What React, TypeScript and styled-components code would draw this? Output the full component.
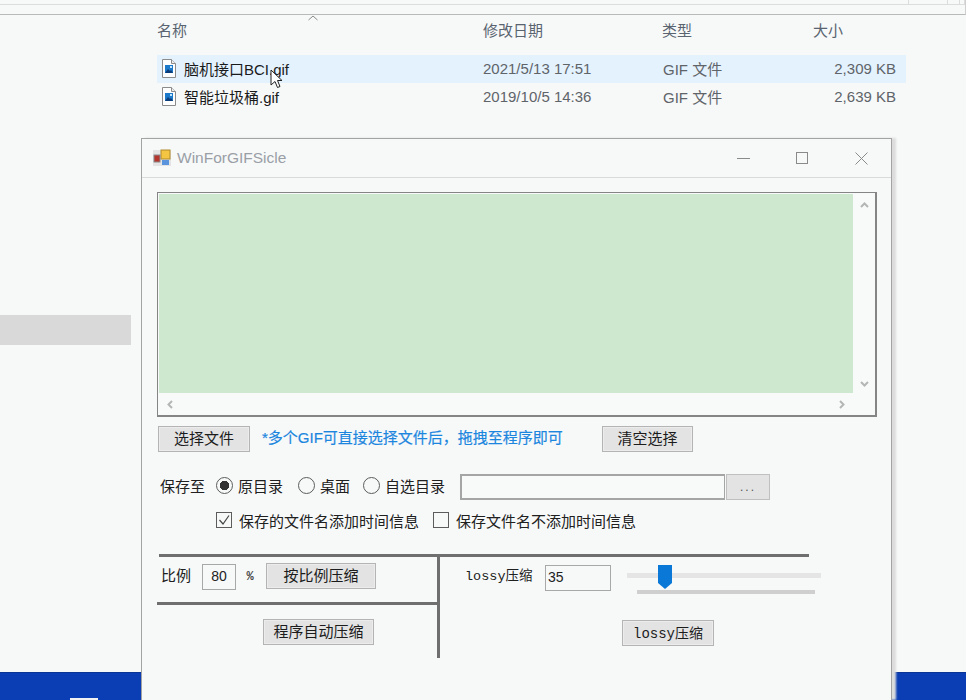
import React from 'react';
import styled, { createGlobalStyle } from 'styled-components';

const cjk = '"Liberation Sans", "Noto Sans CJK SC", sans-serif';
const mono = '"Liberation Mono", "Noto Sans CJK SC", monospace';

const GlobalStyle = createGlobalStyle`
    html, body {
        margin: 0;
        padding: 0;
        background: #f7f9f9;
    }
    * {
        box-sizing: border-box;
    }
`;

const Screen = styled.div`
    position: relative;
    width: 966px;
    height: 700px;
    overflow: hidden;
    display: flex;
    flex-direction: column;
    background: #f7f9f9;
    font-family: ${cjk};
`;

const Explorer = styled.div`
    flex: 1;
    display: flex;
    flex-direction: column;
`;

const AddressBar = styled.div`
    height: 15px;
    border-bottom: 1px solid #b9b9b9;
    border-right: 1px solid #cfcfcf;
`;

const SearchStrip = styled.div`
    height: 4px;
    display: flex;
    padding-left: 908px;
    gap: 11px;
`;

const SearchCell = styled.div<{ $width: number }>`
    width: ${({ $width }) => $width}px;
    border: 1px solid #dcdcdc;
    border-top: none;
    border-bottom: none;
`;

const AddressLine = styled.div`
    height: 1px;
    background: #dcdcdc;
`;

const ExplorerBody = styled.div`
    flex: 1;
    display: flex;
`;

const Sidebar = styled.div`
    width: 157px;
    padding: 300px 26px 0 0;
`;

const SidebarItem = styled.div`
    height: 30px;
    background: #d9d9d9;
`;

const FileList = styled.div`
    width: 749px;
    position: relative;
`;

const SortArrow = styled.svg`
    position: absolute;
    left: 150px;
    top: 0;
`;

const HeaderRow = styled.div`
    display: grid;
    grid-template-columns: 326px 179px 151px 93px;
    height: 40px;
    padding-top: 6px;
    font-size: 15px;
    line-height: 20px;
    color: #5a6470;
`;

const FileRow = styled.div<{ $hover?: boolean }>`
    display: grid;
    grid-template-columns: 326px 180px 150px 83px;
    align-items: center;
    height: 27.5px;
    font-size: 15px;
    color: #5f6469;
    background: ${({ $hover }) => ($hover ? '#e4f2fe' : 'transparent')};
`;

const NameCell = styled.div`
    display: flex;
    align-items: center;
    gap: 8px;
    padding-left: 5px;
    color: #1a1a1a;
    white-space: nowrap;
`;

const SizeCell = styled.div`
    text-align: right;
    white-space: nowrap;
`;

const Taskbar = styled.div`
    height: 28px;
    background: #0b3eb4;
    border-top: 1px solid #0a3596;
    padding: 25px 0 0 70px;
`;

const TaskbarIcon = styled.div`
    width: 28px;
    height: 3px;
    background: #f2f2f2;
`;

const Cursor = styled.svg`
    position: absolute;
    left: 270px;
    top: 69px;
`;

const Window = styled.div`
    position: absolute;
    left: 141px;
    top: 138px;
    width: 751px;
    height: 562px;
    background: #f7f9f9;
    border: 1px solid #a3a3a3;
    border-bottom: none;
    box-shadow: 4px 0 2px #dcdcdc;
    display: flex;
    flex-direction: column;
`;

const TitleBar = styled.div`
    height: 39px;
    display: flex;
    align-items: center;
    padding-left: 11px;
    border-bottom: 1px solid #dadada;
`;

const WindowTitle = styled.span`
    margin-left: 6px;
    font-size: 15.5px;
    color: #9a9fa6;
    flex: 1;
`;

const WindowControl = styled.div`
    width: 59px;
    display: flex;
    justify-content: center;
`;

const WindowBody = styled.div`
    padding: 14px 0 0 15px;
`;

const ListBox = styled.div`
    width: 720px;
    height: 225px;
    border-style: solid;
    border-width: 1px 2px 2px 1px;
    border-color: #858585;
    display: grid;
    grid-template-columns: 694px 1fr;
    grid-template-rows: 199px 1fr;
    padding: 1px 0 0 1px;
    background: #f8fafa;
`;

const ListContent = styled.div`
    background: #cde8cf;
`;

const VScroll = styled.div`
    display: flex;
    flex-direction: column;
    justify-content: space-between;
    align-items: center;
    padding: 6px 0 4px;
`;

const HScroll = styled.div`
    display: flex;
    justify-content: space-between;
    align-items: center;
    padding: 0 6px 0 6px;
`;

const FileToolbar = styled.div`
    display: flex;
    align-items: flex-start;
    margin: 9px 0 0 1px;
`;

const Button = styled.button<{ $width: number }>`
    width: ${({ $width }) => $width}px;
    height: 26px;
    padding: 0 0 3px;
    flex: none;
    background: #e3e3e3;
    border: 1px solid #b4b4b4;
    box-shadow: inset 0 0 0 1px #ececec;
    font-family: ${cjk};
    font-size: 15px;
    color: #1c1c1c;
`;

const RatioButton = styled(Button)`
    margin-top: -1px;
`;

const Hint = styled.div`
    width: 352px;
    padding-left: 12px;
    font-size: 15px;
    line-height: 24px;
    color: #1c86de;
    -webkit-text-stroke: 0.2px #1c86de;
    white-space: nowrap;
`;

const SaveRow = styled.div`
    display: flex;
    align-items: center;
    height: 26px;
    margin: 22px 0 0 3px;
    font-size: 15px;
    color: #202020;
`;

const SaveLabel = styled.span`
    width: 56px;
    padding-bottom: 3px;
`;

const RadioItem = styled.label<{ $width: number }>`
    width: ${({ $width }) => $width}px;
    padding-bottom: 3px;
    display: flex;
    align-items: center;
    gap: 5px;
    white-space: nowrap;
`;

const RadioCircle = styled.span<{ $checked?: boolean }>`
    width: 17px;
    height: 17px;
    flex: none;
    border-radius: 50%;
    border: 1px solid #5c5c5c;
    background: ${({ $checked }) =>
        $checked ? 'radial-gradient(circle, #333 0 4.5px, #f7f9f9 5px)' : 'transparent'};
`;

const PathInput = styled.div`
    width: 265px;
    height: 26px;
    border: 1px solid #a5a5a5;
    border-width: 2px 1px 2px 2px;
    background: #f8fafa;
`;

const BrowseButton = styled.div`
    width: 44px;
    height: 26px;
    margin-left: 1px;
    background: #e3e3e3;
    border: 1px solid #c0c0c0;
    color: #555;
    font-size: 12px;
    letter-spacing: 2px;
    display: flex;
    align-items: center;
    justify-content: center;
`;

const CheckRow = styled.div`
    display: flex;
    align-items: center;
    height: 22px;
    margin: 9px 0 0 59px;
    font-size: 15px;
    color: #202020;
`;

const CheckItem = styled.label<{ $width?: number }>`
    ${({ $width }) => ($width ? `width: ${$width}px;` : '')}
    display: flex;
    align-items: center;
    gap: 7px;
    white-space: nowrap;
`;

const CheckBox = styled.span`
    width: 16px;
    height: 16px;
    flex: none;
    border: 1px solid #5c5c5c;
    display: flex;
    align-items: center;
    justify-content: center;
`;

const Panels = styled.div`
    display: grid;
    grid-template-columns: 283px 369px;
    margin-top: 23px;
    height: 104px;
`;

const LeftPanel = styled.div`
    display: flex;
    flex-direction: column;
    border-right: 3px solid #6f6f6f;
`;

const RightPanel = styled.div`
    border-top: 3px solid #6f6f6f;
    display: flex;
    flex-direction: column;
`;

const TopRule = styled.div`
    height: 3px;
    margin-left: 2px;
    background: #6f6f6f;
`;

const RatioRow = styled.div`
    height: 48px;
    padding: 7px 0 0 2px;
    border-bottom: 3px solid #6f6f6f;
    display: flex;
    align-items: flex-start;
    font-size: 15px;
    color: #202020;
`;

const RowLabel = styled.span`
    width: 43px;
    padding-left: 2px;
    line-height: 24px;
`;

const ValueInput = styled.div<{ $width: number; $center?: boolean }>`
    width: ${({ $width }) => $width}px;
    height: 26px;
    flex: none;
    border: 1px solid #a8a8a8;
    padding: 0 2px;
    font-size: 14px;
    line-height: 23px;
    color: #222;
    text-align: ${({ $center }) => ($center ? 'center' : 'left')};
`;

const Percent = styled.span`
    width: 30px;
    padding-right: 2px;
    text-align: center;
    font-family: "Liberation Mono", monospace;
    font-size: 12px;
    font-weight: bold;
    line-height: 26px;
    color: #444;
`;

const AutoRow = styled.div`
    display: flex;
    justify-content: flex-start;
    padding: 14px 0 0 106px;
`;

const LossyRow = styled.div`
    display: flex;
    align-items: flex-start;
    padding: 8px 0 0 25px;
`;

const LossyLabel = styled.span`
    width: 80px;
    flex: none;
    font-family: ${mono};
    font-size: 13.5px;
    line-height: 24px;
    color: #202020;
    white-space: nowrap;
`;

const ButtonMono = styled.span`
    font-family: ${mono};
    font-size: 14px;
`;

const Slider = styled.div`
    position: relative;
    width: 194px;
    height: 26px;
    flex: none;
    margin-left: 16px;
`;

const SliderTrack = styled.div`
    height: 5px;
    margin-top: 8px;
    background: #e5e5e5;
`;

const SliderBase = styled.div`
    height: 4px;
    margin: 12px 6px 0 10px;
    background: #cfcfcf;
`;

const SliderThumb = styled.svg`
    position: absolute;
    left: 31px;
    top: 0;
`;

const LossyButtonRow = styled.div`
    padding: 29px 0 0 182px;
`;

const FileIcon = () => (
    <svg width="14" height="19" viewBox="0 0 14 19">
        <path d="M.5.5h9l4 4v14H.5z" fill="#fff" stroke="#8b8b8b" />
        <path d="M9.5.5v4h4" fill="#eee" stroke="#8b8b8b" />
        <rect x="3" y="6" width="8" height="8" fill="#1d79c9" />
        <path d="M3 14l3-4 2 2 1-1 2 3z" fill="#0c3d78" />
        <rect x="8" y="7" width="2" height="2" fill="#bfe3fb" />
    </svg>
);

const AppIcon = () => (
    <svg width="18" height="18" viewBox="0 0 18 18">
        <rect x="0" y="1" width="18" height="16" fill="#e4e4e4" />
        <rect x="8" y="1" width="9" height="9" fill="#f4c542" stroke="#b08a2c" />
        <rect x="1" y="6" width="6" height="7" fill="#b5342c" stroke="#8a8a8a" />
        <rect x="9" y="11" width="7" height="5" fill="#5a94dc" />
    </svg>
);

const Chevron = ({ rotate }: { rotate: number }) => (
    <svg width="11" height="11" viewBox="0 0 11 11" style={{ transform: `rotate(${rotate}deg)` }}>
        <path d="M2 7l3.5-3.5L9 7" fill="none" stroke="#b5b5b5" strokeWidth="2" />
    </svg>
);

const rows = [
    { name: '脑机接口BCI.gif', date: '2021/5/13 17:51', size: '2,309 KB', hover: true },
    { name: '智能垃圾桶.gif', date: '2019/10/5 14:36', size: '2,639 KB', hover: false },
];

const App: React.FC = () => (
    <Screen>
        <GlobalStyle />
        <Explorer>
            <AddressBar>
                <SearchStrip>
                    <SearchCell $width={40} />
                    <SearchCell $width={6} />
                </SearchStrip>
                <AddressLine />
            </AddressBar>
            <ExplorerBody>
                <Sidebar>
                    <SidebarItem />
                </Sidebar>
                <FileList>
                    <SortArrow width="12" height="6" viewBox="0 0 12 6">
                        <path d="M1.5 5L6 1l4.5 4" fill="none" stroke="#8a8a8a" />
                    </SortArrow>
                    <HeaderRow>
                        <span>名称</span>
                        <span>修改日期</span>
                        <span>类型</span>
                        <span>大小</span>
                    </HeaderRow>
                    {rows.map((row) => (
                        <FileRow key={row.name} $hover={row.hover}>
                            <NameCell>
                                <FileIcon />
                                {row.name}
                            </NameCell>
                            <span>{row.date}</span>
                            <span>GIF 文件</span>
                            <SizeCell>{row.size}</SizeCell>
                        </FileRow>
                    ))}
                </FileList>
            </ExplorerBody>
        </Explorer>
        <Taskbar>
            <TaskbarIcon />
        </Taskbar>
        <Cursor width="13" height="21" viewBox="0 0 13 21">
            <path d="M1 1v15l4-3.5 2.5 6 2.5-1-2.5-6H12z" fill="#fff" stroke="#222" strokeWidth="1" />
        </Cursor>
        <Window>
            <TitleBar>
                <AppIcon />
                <WindowTitle>WinForGIFSicle</WindowTitle>
                <WindowControl>
                    <svg width="13" height="13" viewBox="0 0 13 13">
                        <path d="M0 6.5h13" stroke="#8a8a8a" />
                    </svg>
                </WindowControl>
                <WindowControl>
                    <svg width="13" height="13" viewBox="0 0 13 13">
                        <rect x=".5" y=".5" width="11" height="11" fill="none" stroke="#8a8a8a" />
                    </svg>
                </WindowControl>
                <WindowControl>
                    <svg width="13" height="13" viewBox="0 0 13 13">
                        <path d="M.5.5l12 12M12.5.5l-12 12" stroke="#8a8a8a" />
                    </svg>
                </WindowControl>
            </TitleBar>
            <WindowBody>
                <ListBox>
                    <ListContent />
                    <VScroll>
                        <Chevron rotate={0} />
                        <Chevron rotate={180} />
                    </VScroll>
                    <HScroll>
                        <Chevron rotate={-90} />
                        <Chevron rotate={90} />
                    </HScroll>
                </ListBox>
                <FileToolbar>
                    <Button $width={92}>选择文件</Button>
                    <Hint>*多个GIF可直接选择文件后，拖拽至程序即可</Hint>
                    <Button $width={91}>清空选择</Button>
                </FileToolbar>
                <SaveRow>
                    <SaveLabel>保存至</SaveLabel>
                    <RadioItem $width={82}>
                        <RadioCircle $checked />
                        原目录
                    </RadioItem>
                    <RadioItem $width={65}>
                        <RadioCircle />
                        桌面
                    </RadioItem>
                    <RadioItem $width={97}>
                        <RadioCircle />
                        自选目录
                    </RadioItem>
                    <PathInput />
                    <BrowseButton>...</BrowseButton>
                </SaveRow>
                <CheckRow>
                    <CheckItem $width={217}>
                        <CheckBox>
                            <svg width="12" height="12" viewBox="0 0 12 12">
                                <path d="M1.5 6l3.5 4 6-8.5" fill="none" stroke="#444" strokeWidth="1.2" />
                            </svg>
                        </CheckBox>
                        保存的文件名添加时间信息
                    </CheckItem>
                    <CheckItem>
                        <CheckBox />
                        保存文件名不添加时间信息
                    </CheckItem>
                </CheckRow>
                <Panels>
                    <LeftPanel>
                        <TopRule />
                        <RatioRow>
                            <RowLabel>比例</RowLabel>
                            <ValueInput $width={34} $center>80</ValueInput>
                            <Percent>%</Percent>
                            <RatioButton $width={110}>按比例压缩</RatioButton>
                        </RatioRow>
                        <AutoRow>
                            <Button $width={111}>程序自动压缩</Button>
                        </AutoRow>
                    </LeftPanel>
                    <RightPanel>
                        <LossyRow>
                            <LossyLabel>lossy压缩</LossyLabel>
                            <ValueInput $width={66}>35</ValueInput>
                            <Slider>
                                <SliderTrack />
                                <SliderBase />
                                <SliderThumb width="14" height="24" viewBox="0 0 14 24">
                                    <path d="M0 0h14v18l-7 6-7-6z" fill="#0a78d7" />
                                </SliderThumb>
                            </Slider>
                        </LossyRow>
                        <LossyButtonRow>
                            <Button $width={92}>
                                <ButtonMono>lossy压缩</ButtonMono>
                            </Button>
                        </LossyButtonRow>
                    </RightPanel>
                </Panels>
            </WindowBody>
        </Window>
    </Screen>
);

export default App;
